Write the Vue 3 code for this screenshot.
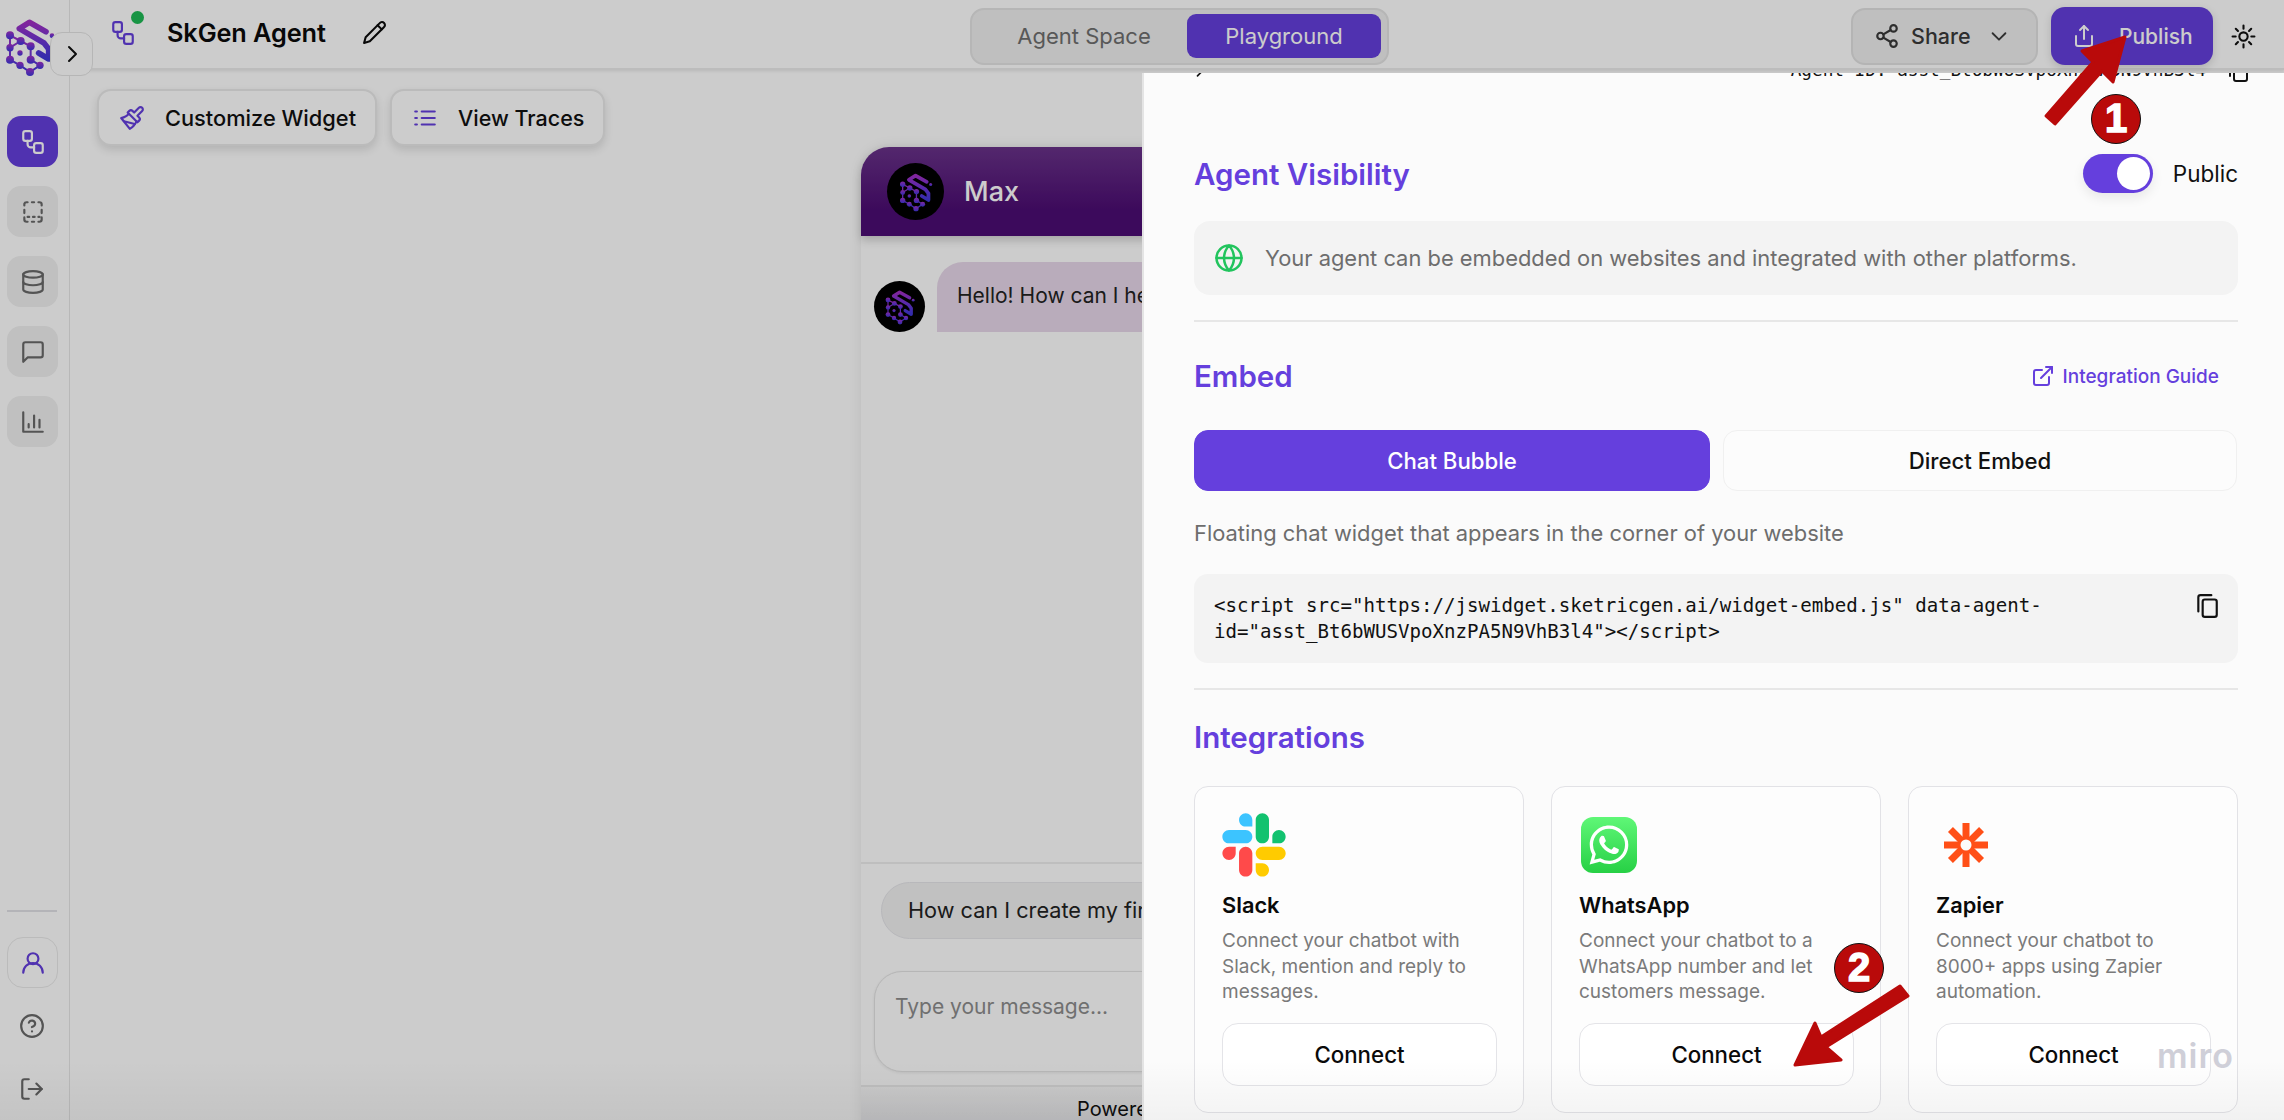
<script setup>
const navItems = ['flow', 'dashed', 'db', 'chat', 'bars']
const integrations = [
  { name: 'Slack', icon: 'slack', desc: 'Connect your chatbot with Slack, mention and reply to messages.' },
  { name: 'WhatsApp', icon: 'whatsapp', desc: 'Connect your chatbot to a WhatsApp number and let customers message.' },
  { name: 'Zapier', icon: 'zapier', desc: 'Connect your chatbot to 8000+ apps using Zapier automation.' }
]
const spokes = [0, 45, 90, 135, 180, 225, 270, 315]
</script>

<template>
  <div class="page">
    <svg class="defs" width="0" height="0" aria-hidden="true">
      <defs>
        <linearGradient id="logoGrad" x1="0" y1="0" x2="0" y2="1">
          <stop offset="0" stop-color="#a22fc4" />
          <stop offset="0.55" stop-color="#6a35d6" />
          <stop offset="1" stop-color="#3f37d8" />
        </linearGradient>
        <linearGradient id="waGrad" x1="0" y1="0" x2="0" y2="1">
          <stop offset="0" stop-color="#5ff777" />
          <stop offset="1" stop-color="#27d045" />
        </linearGradient>
        <symbol id="brand" viewBox="15 20 150 180">
          <g fill="none" stroke="url(#logoGrad)" stroke-linejoin="round">
            <path d="M138 64 88 36 58 55 132 98 146 116V146L116 128" stroke-width="17" />
            <path d="M30 75 62 92 92 108M30 75V148M30 112 62 92M30 148 60 165 90 185 120 165 92 148M92 108 92 148" stroke-width="6" />
          </g>
          <g fill="url(#logoGrad)">
            <circle cx="156" cy="76" r="7" />
            <circle cx="30" cy="75" r="12" /><circle cx="30" cy="112" r="11" /><circle cx="30" cy="148" r="12" />
            <circle cx="62" cy="92" r="12" /><circle cx="92" cy="108" r="12" /><circle cx="60" cy="128" r="8" />
            <circle cx="92" cy="148" r="12" /><circle cx="60" cy="165" r="11" /><circle cx="90" cy="185" r="12" /><circle cx="120" cy="165" r="11" />
          </g>
        </symbol>
        <symbol id="flow" viewBox="0 0 24 24">
          <rect x="3" y="2" width="8" height="9" rx="2" /><rect x="13" y="13" width="8" height="9" rx="2" />
          <path d="M7 11v3a3 3 0 0 0 3 3h3" />
        </symbol>
      </defs>
    </svg>

    <aside class="sidebar">
      <svg class="brand"><use href="#brand" /></svg>
      <nav class="nav">
        <button v-for="(item, i) in navItems" :key="item" class="nav-btn" :class="{ active: i === 0 }">
          <svg v-if="item === 'flow'" class="ic"><use href="#flow" /></svg>
          <svg v-else-if="item === 'dashed'" class="ic" viewBox="0 0 24 24"><path d="M4 6V4.500A2 2 0 0 1 6 3h1M11 3h2M17 3h1a2 2 0 0 1 2 2v1M20 10v3M4 10v3M4 17v2a2 2 0 0 0 2 2h1M11 21h2M17 21h1a2 2 0 0 0 2-2v-2M7 16.500h1.500M12 16.500h1.500M17 16.500h1" /></svg>
          <svg v-else-if="item === 'db'" class="ic" viewBox="0 0 24 24"><ellipse cx="12" cy="5" rx="9" ry="3" /><path d="M3 5v14a9 3 0 0 0 18 0V5" /><path d="M3 12a9 3 0 0 0 18 0" /></svg>
          <svg v-else-if="item === 'chat'" class="ic" viewBox="0 0 24 24"><path d="M21 15a2 2 0 0 1-2 2H7l-4 4V5a2 2 0 0 1 2-2h14a2 2 0 0 1 2 2z" /></svg>
          <svg v-else class="ic" viewBox="0 0 24 24"><path d="M3 3v18h18" /><path d="M8 17v-3M13 17V6M18 17v-7" /></svg>
        </button>
      </nav>
      <div class="side-bottom">
        <div class="side-rule"></div>
        <button class="user-btn">
          <svg class="ic purple" viewBox="0 0 24 24"><circle cx="12" cy="8" r="5" /><path d="M21 21a9 9 0 0 0-18 0" /></svg>
        </button>
        <button class="plain-btn">
          <svg class="ic" viewBox="0 0 24 24"><circle cx="12" cy="12" r="10" /><path d="M9.090 9a3 3 0 0 1 5.830 1c0 2-3 3-3 3" /><path d="M12 17h.010" /></svg>
        </button>
        <button class="plain-btn">
          <svg class="ic" viewBox="0 0 24 24"><path d="M9 21H5a2 2 0 0 1-2-2V5a2 2 0 0 1 2-2h4" /><path d="m16 17 5-5-5-5" /><path d="M21 12H9" /></svg>
        </button>
      </div>
      <button class="expand">
        <svg viewBox="0 0 24 24"><path d="m9 5 7 7-7 7" /></svg>
      </button>
    </aside>

    <main class="main">
      <header class="topbar">
        <div class="top-left">
          <span class="agent-icon">
            <svg class="ic-lg purple"><use href="#flow" /></svg>
            <i class="status"></i>
          </span>
          <h1 class="agent-name">SkGen Agent</h1>
          <svg class="pencil" viewBox="0 0 24 24"><path d="M17 3a2.850 2.830 0 1 1 4 4L7.500 20.500 2 22l1.500-5.500Z" /><path d="m15 5 4 4" /></svg>
        </div>
        <div class="segment">
          <span class="seg-item">Agent Space</span>
          <span class="seg-item on">Playground</span>
        </div>
        <div class="top-right">
          <button class="share">
            <svg class="ic" viewBox="0 0 24 24"><circle cx="18" cy="5" r="3" /><circle cx="6" cy="12" r="3" /><circle cx="18" cy="19" r="3" /><path d="m8.600 13.500 6.800 4M15.400 6.500l-6.800 4" /></svg>
            <span>Share</span>
            <svg class="chev" viewBox="0 0 24 24"><path d="m5 9 7 7 7-7" /></svg>
          </button>
          <button class="publish">
            <svg class="ic-up" viewBox="0 0 24 24"><path d="M4 12v8a2 2 0 0 0 2 2h12a2 2 0 0 0 2-2v-8" /><path d="m16 6-4-4-4 4" /><path d="M12 2v13" /></svg>
            <span>Publish</span>
          </button>
          <svg class="sun" viewBox="0 0 24 24"><circle cx="12" cy="12" r="4" /><path d="M12 1.500v3M12 19.500v3M1.500 12h3M19.500 12h3M4.600 4.600l2.100 2.100M17.300 17.300l2.100 2.100M4.600 19.400l2.100-2.100M17.300 6.700l2.100-2.100" /></svg>
        </div>
      </header>

      <section class="stage">
        <div class="tools">
          <button class="tool">
            <svg class="ic purple" viewBox="0 0 24 24"><path d="M18.370 2.630 14 7l-1.590-1.590a2 2 0 0 0-2.820 0L8 7l9 9 1.590-1.590a2 2 0 0 0 0-2.820L17 10l4.370-4.370a2.120 2.120 0 1 0-3-3Z" /><path d="M9 8c-2 3-4 3.500-7 4l8 10c2-1 6-5 6-7" /><path d="M14.500 17.500 4.500 15" /></svg>
            <span>Customize Widget</span>
          </button>
          <button class="tool">
            <svg class="ic purple" viewBox="0 0 24 24"><path d="M9 6h12M9 12h12M9 18h12" /><path d="M3 6h1.500M3 12h1.500M3 18h1.500" stroke-dasharray="1.500 1.500" /></svg>
            <span>View Traces</span>
          </button>
        </div>

        <article class="chat">
          <div class="chat-head">
            <span class="avatar big"><svg><use href="#brand" /></svg></span>
            <span class="chat-name">Max</span>
          </div>
          <div class="chat-body">
            <div class="msg">
              <span class="avatar small"><svg><use href="#brand" /></svg></span>
              <div class="bubble">Hello! How can I help you today?</div>
            </div>
          </div>
          <div class="suggest">
            <span class="pill">How can I create my first agent?</span>
          </div>
          <div class="input-wrap">
            <div class="input">Type your message...</div>
          </div>
          <div class="chat-foot"><span class="powered">Powered by SketricGen</span></div>
        </article>
      </section>
    </main>

    <div class="scrim"></div>

    <aside class="drawer">
      <div class="agent-row">
        <svg class="mini-chev" viewBox="0 0 24 24"><path d="m9 5 7 7-7 7" /></svg>
        <span class="agent-id">Agent ID: asst_Bt6bWUSVpoXnzPA5N9VhB3l4</span>
        <svg class="copy-top" viewBox="0 0 24 24"><rect x="8" y="6" width="13" height="16" rx="2" /><path d="M4 17V4a2 2 0 0 1 2-2h10" /></svg>
      </div>

      <div class="vis-row">
        <h2 class="heading">Agent Visibility</h2>
        <div class="vis-ctl">
          <span class="toggle"><i class="knob"></i></span>
          <span class="public">Public</span>
        </div>
      </div>

      <div class="info">
        <svg class="globe" viewBox="0 0 24 24"><circle cx="12" cy="12" r="10" /><path d="M2 12h20" /><path d="M12 2a15.300 15.300 0 0 1 4 10 15.300 15.300 0 0 1-4 10 15.300 15.300 0 0 1-4-10 15.300 15.300 0 0 1 4-10z" /></svg>
        <span>Your agent can be embedded on websites and integrated with other platforms.</span>
      </div>

      <hr class="rule rule-a" />

      <div class="embed-head">
        <h2 class="heading">Embed</h2>
        <a class="guide">
          <svg viewBox="0 0 24 24"><path d="M18 13v6a2 2 0 0 1-2 2H5a2 2 0 0 1-2-2V8a2 2 0 0 1 2-2h6" /><path d="M15 3h6v6" /><path d="M10 14 21 3" /></svg>
          <span>Integration Guide</span>
        </a>
      </div>

      <div class="tabs">
        <button class="tab on">Chat Bubble</button>
        <button class="tab">Direct Embed</button>
      </div>

      <p class="hint">Floating chat widget that appears in the corner of your website</p>

      <div class="code">
        <code>&lt;script src="https://jswidget.sketricgen.ai/widget-embed.js" data-agent-<br />id="asst_Bt6bWUSVpoXnzPA5N9VhB3l4"&gt;&lt;/script&gt;</code>
        <svg class="copy" viewBox="0 0 24 24"><rect x="8" y="6" width="13" height="16" rx="2" /><path d="M4 17V4a2 2 0 0 1 2-2h10" /></svg>
      </div>

      <hr class="rule rule-b" />

      <h2 class="heading int-head">Integrations</h2>

      <div class="cards">
        <div v-for="card in integrations" :key="card.name" class="card">
          <div class="logo-box">
            <svg v-if="card.icon === 'slack'" class="slack" viewBox="0 0 127 127">
              <path fill="#ff4a4a" d="M27.200 80c0 7.300-5.900 13.200-13.200 13.200C6.700 93.200.800 87.300.800 80c0-7.300 5.900-13.200 13.200-13.200h13.200V80zm6.600 0c0-7.300 5.900-13.200 13.200-13.200 7.300 0 13.200 5.900 13.200 13.200v33c0 7.300-5.900 13.200-13.200 13.200-7.300 0-13.200-5.900-13.200-13.200V80z" />
              <path fill="#3cc4ff" d="M47 27c-7.300 0-13.200-5.900-13.200-13.200C33.800 6.500 39.700.600 47 .600c7.300 0 13.200 5.900 13.200 13.200V27H47zm0 6.700c7.300 0 13.200 5.900 13.200 13.200 0 7.300-5.900 13.200-13.200 13.200H13.900C6.600 60.100.700 54.200.700 46.900c0-7.300 5.900-13.200 13.200-13.200H47z" />
              <path fill="#12c26f" d="M99.900 46.900c0-7.300 5.900-13.200 13.200-13.200 7.300 0 13.200 5.900 13.200 13.200 0 7.300-5.900 13.200-13.200 13.200H99.900V46.900zm-6.600 0c0 7.300-5.900 13.200-13.200 13.200-7.300 0-13.200-5.900-13.200-13.200V13.800C66.900 6.500 72.800.600 80.100.600c7.300 0 13.200 5.900 13.200 13.200v33.100z" />
              <path fill="#ffcb00" d="M80.100 99.800c7.300 0 13.200 5.900 13.200 13.200 0 7.300-5.900 13.200-13.200 13.200-7.300 0-13.200-5.900-13.200-13.200V99.800h13.200zm0-6.600c-7.300 0-13.200-5.900-13.200-13.200 0-7.300 5.900-13.200 13.200-13.200h33.100c7.300 0 13.200 5.900 13.200 13.200 0 7.300-5.900 13.200-13.200 13.200H80.100z" />
            </svg>
            <svg v-else-if="card.icon === 'whatsapp'" class="whatsapp" viewBox="0 0 56 56">
              <rect width="56" height="56" rx="12" fill="url(#waGrad)" />
              <path transform="translate(8.500 8.500) scale(1.620)" fill="#fff" d="M17.472 14.382c-.297-.149-1.758-.867-2.030-.967-.273-.099-.471-.148-.670.150-.197.297-.767.966-.940 1.164-.173.199-.347.223-.644.075-.297-.150-1.255-.463-2.390-1.475-.883-.788-1.480-1.761-1.653-2.059-.173-.297-.018-.458.130-.606.134-.133.298-.347.446-.520.149-.174.198-.298.298-.497.099-.198.050-.371-.025-.520-.075-.149-.669-1.612-.916-2.207-.242-.579-.487-.500-.669-.510-.173-.008-.371-.010-.570-.010-.198 0-.520.074-.792.372-.272.297-1.040 1.016-1.040 2.479 0 1.462 1.065 2.875 1.213 3.074.149.198 2.096 3.200 5.077 4.487.709.306 1.262.489 1.694.625.712.227 1.360.195 1.871.118.571-.085 1.758-.719 2.006-1.413.248-.694.248-1.289.173-1.413-.074-.124-.272-.198-.570-.347m-5.421 7.403h-.004a9.870 9.870 0 01-5.031-1.378l-.361-.214-3.741.982.998-3.648-.235-.374a9.860 9.860 0 01-1.510-5.260c.001-5.450 4.436-9.884 9.888-9.884 2.640 0 5.122 1.030 6.988 2.898a9.825 9.825 0 012.893 6.994c-.003 5.450-4.437 9.884-9.885 9.884m8.413-18.297A11.815 11.815 0 0012.050 0C5.495 0 .160 5.335.157 11.892c0 2.096.547 4.142 1.588 5.945L.057 24l6.305-1.654a11.882 11.882 0 005.683 1.448h.005c6.554 0 11.890-5.335 11.893-11.893a11.821 11.821 0 00-3.480-8.413z" />
            </svg>
            <svg v-else class="zapier" viewBox="0 0 44 44">
              <path v-for="a in spokes" :key="a" :transform="`rotate(${a} 22 22)`" d="M22 22V0" stroke="#ff4f17" stroke-width="7" fill="none" />
              <circle cx="22" cy="22" r="5.500" fill="#fcfcfc" />
            </svg>
          </div>
          <h3 class="card-title">{{ card.name }}</h3>
          <p class="card-desc">{{ card.desc }}</p>
          <button class="connect">Connect</button>
        </div>
      </div>
    </aside>

    <div class="fade"></div>
    <span class="miro">miro</span>

    <svg class="marks" viewBox="0 0 2284 1120">
      <polygon points="2046,116 2093,62 2082,51 2125,37 2113,82 2102,71 2055,124" />
      <polygon points="1900,986 1908,996 1826,1047 1841,1060 1795,1065 1815,1023 1821,1037" />
    </svg>
    <span class="num one">1</span>
    <span class="num two">2</span>
  </div>
</template>

<style>
html, body { margin: 0; overflow: hidden; background: #fff; }
</style>

<style scoped>
.page {
  position: relative; display: flex; width: 2284px; height: 1120px; overflow: hidden;
  background: #fff; color: #0a0a0a; font-family: Inter, "Noto Sans", sans-serif;
}
.defs { position: absolute; }
button { font-family: inherit; cursor: pointer; }
h1, h2, h3, p { margin: 0; }
svg { fill: none; stroke: currentColor; stroke-width: 2; stroke-linecap: round; stroke-linejoin: round; display: block; }
.ic { width: 26px; height: 26px; }
.ic-lg { width: 26px; height: 26px; }
.purple { color: #653fdd; }

/* sidebar */
.sidebar {
  position: relative; flex: 0 0 70px; box-sizing: border-box; width: 70px; height: 100%;
  display: flex; flex-direction: column; padding: 17px 0 18px 7px; border-right: 1.500px solid #e6e6e6;
}
.brand { width: 50px; height: 60px; margin-left: -2px; stroke: none; }
.nav { display: flex; flex-direction: column; gap: 19px; margin-top: 39px; }
.nav-btn {
  width: 51px; height: 51px; border: 0; border-radius: 14px; background: #f0f0f0; color: #6a6a6a;
  display: flex; align-items: center; justify-content: center; padding: 0;
}
.nav-btn.active { background: #653fdd; color: #fff; }
.side-bottom { margin-top: auto; display: flex; flex-direction: column; align-items: flex-start; }
.side-rule { width: 50px; height: 2px; background: #e2e2e6; margin-bottom: 25px; }
.user-btn {
  width: 51px; height: 51px; box-sizing: border-box; padding: 0; border: 1.500px solid #eaeaea; border-radius: 16px;
  background: #fff; display: flex; align-items: center; justify-content: center; margin-bottom: 25px;
}
.plain-btn {
  width: 50px; height: 26px; padding: 0; border: 0; background: none; color: #6a6a6a;
  display: flex; align-items: center; justify-content: center;
}
.plain-btn + .plain-btn { margin-top: 37px; }
.expand {
  position: absolute; left: 50px; top: 32px; width: 43px; height: 44px; padding: 0; z-index: 3;
  background: #fff; border: 1.500px solid #e4e4e4; border-radius: 12px; color: #111;
  display: flex; align-items: center; justify-content: center;
}
.expand svg { width: 24px; height: 24px; }

/* main */
.main { flex: 1; min-width: 0; display: flex; flex-direction: column; overflow: hidden; }
.topbar {
  box-sizing: border-box; height: 70px; flex: none; display: grid; grid-template-columns: 1fr auto 1fr; align-items: center;
  padding: 0 28px 7px 33px; border-bottom: 2px solid #ececec; box-shadow: 0 1px 3px rgba(0,0,0,.1);
}
.top-left { display: flex; align-items: center; padding-left: 7px; }
.agent-icon { position: relative; display: block; width: 26px; height: 26px; margin-right: 31px; }
.status { position: absolute; left: 21px; top: -9px; width: 13px; height: 13px; border-radius: 50%; background: #1fb955; }
.agent-name { font-size: 25.300px; font-weight: 600; letter-spacing: -.1px; }
.pencil { width: 25px; height: 25px; margin-left: 36px; }
.segment {
  box-sizing: border-box; width: 419px; height: 57px; display: flex; align-items: center; justify-content: space-between;
  padding: 0 6px 0 24px; margin-top: 7px; background: #efefef; border: 2px solid #e4e4e4; border-radius: 14px;
}
.seg-item { font-size: 22px; color: #6e6e6e; width: 176px; text-align: center; }
.seg-item.on {
  width: 194px; height: 44px; line-height: 44px; background: #653fdd; color: #fff; border-radius: 9px;
}
.top-right { display: flex; align-items: center; justify-content: flex-end; margin-top: 7px; }
.share {
  box-sizing: border-box; width: 187px; height: 57px; padding: 0 26px 0 21px; margin-right: 13px;
  display: flex; align-items: center; background: #efefef; border: 2px solid #e2e2e2; border-radius: 14px;
  font-size: 21.500px; font-weight: 500; color: #3a3a3a;
}
.share span { margin-left: 11px; }
.chev { width: 22px; height: 22px; margin-left: auto; }
.publish {
  width: 162px; height: 58px; padding: 0 0 0 21px; border: 0; border-radius: 14px; background: #653fdd; color: #fff;
  display: flex; align-items: center; font-size: 21px; font-weight: 500; box-shadow: 0 3px 8px rgba(0,0,0,.15);
}
.ic-up { width: 24px; height: 24px; }
.publish span { margin-left: 23px; }
.sun { width: 25px; height: 25px; margin-left: 18px; color: #111; }

/* stage */
.stage { flex: 1; min-height: 0; display: flex; flex-direction: column; padding: 19px 27px 0; }
.tools { display: flex; gap: 13px; }
.tool {
  box-sizing: border-box; height: 57px; padding: 0 19px 0 20px; display: flex; align-items: center; gap: 20px;
  background: #fff; border: 2px solid #eaeaea; border-radius: 14px; font-size: 21.800px; font-weight: 500; color: #111;
  box-shadow: 0 4px 8px rgba(0,0,0,.12);
}
.tool + .tool { font-size: 21.500px; }
.chat {
  box-sizing: border-box; width: 632px; height: 990px; flex: none; align-self: center; margin-top: 1px;
  display: flex; flex-direction: column; border-radius: 28px 28px 0 0; background: #fff;
  box-shadow: 0 0 14px rgba(0,0,0,.08);
}
.chat-head {
  height: 89px; flex: none; display: flex; align-items: center; padding-left: 26px; border-radius: 28px 28px 0 0;
  background: linear-gradient(#693289, #4c0d73 70%); box-shadow: 0 4px 10px rgba(0,0,0,.2);
}
.chat-name { font-size: 27px; font-weight: 500; color: #fff; margin-left: 20px; }
.avatar { display: flex; align-items: center; justify-content: center; background: #000; border-radius: 50%; flex: none; }
.avatar.big { width: 57px; height: 57px; }
.avatar.big svg { width: 34px; height: 40px; stroke: none; }
.avatar.small { width: 51px; height: 51px; }
.avatar.small svg { width: 30px; height: 36px; stroke: none; }
/* the drawer covers the widget from 281px on, so its rows stop there */
.chat-body { height: 626px; flex: none; box-sizing: border-box; padding: 26px 0 0 13px; width: 281px; overflow: hidden; }
.msg { display: flex; align-items: flex-end; gap: 12px; }
.bubble {
  height: 70px; line-height: 68px; padding: 0 20px; font-size: 21px; white-space: nowrap; color: #222;
  background: #e8d8ea; border-radius: 26px 26px 0 0;
}
.suggest { flex: none; border-top: 2px solid #eeeeee; padding: 18px 0 0 20px; height: 89px; box-sizing: border-box; width: 281px; overflow: hidden; }
.pill {
  display: inline-block; height: 57px; line-height: 55px; box-sizing: border-box; padding: 0 26px; white-space: nowrap;
  background: #f2f2f2; border: 1.500px solid #e6e6ea; border-radius: 29px; font-size: 21.700px; color: #222;
}
.input-wrap { flex: none; padding: 20px 13px 13px; }
.input {
  box-sizing: border-box; height: 101px; padding: 22px 20px; background: #fff; border: 1.500px solid #e4e4e4;
  border-radius: 28px; font-size: 21px; color: #8c8c8c; box-shadow: 0 1px 3px rgba(0,0,0,.08);
}
.chat-foot {
  flex: 1; border-top: 2px solid #ececec; background: linear-gradient(#fafafa, #e6e6ea); padding: 10px 0 0 216px;
}
.powered { font-size: 20px; color: #111; white-space: nowrap; }

.scrim { position: absolute; inset: 0; background: rgba(0,0,0,.2); z-index: 5; }

/* drawer */
.drawer {
  position: absolute; z-index: 6; left: 1142px; top: 73px; right: 0; bottom: 0; box-sizing: border-box;
  padding: 0 46px 0 50px; background: #fbfbfb; overflow: hidden; border-left: 2px solid #e4e4e4;
}
.agent-row { height: 30px; margin-top: -18px; display: flex; align-items: center; position: relative; }
.mini-chev { width: 20px; height: 20px; margin-left: -4px; color: #111; }
.agent-id { margin-left: auto; margin-right: 20px; font-family: "DejaVu Sans Mono", monospace; font-size: 17.700px; color: #111; white-space: nowrap; }
.copy-top { width: 24px; height: 24px; margin-right: -12px; margin-top: 2px; color: #111; }
.heading { font-size: 29.500px; line-height: 38px; font-weight: 600; color: #653fdd; }
.vis-row { height: 39px; margin-top: 69px; display: flex; align-items: center; justify-content: space-between; }
.vis-ctl { display: flex; align-items: center; }
.toggle {
  display: block; position: relative; width: 70px; height: 39px; border-radius: 20px; background: #653fdd;
  box-shadow: 0 5px 12px rgba(0,0,0,.08);
}
.knob { position: absolute; right: 3px; top: 3px; width: 33px; height: 33px; border-radius: 50%; background: #fff; }
.public { margin-left: 20px; font-size: 22.500px; color: #111; }
.info {
  box-sizing: border-box; height: 74px; margin-top: 28px; display: flex; align-items: center; padding-left: 20px; gap: 21px;
  background: #f3f3f3; border-radius: 16px; font-size: 21.900px; color: #6d6d6d;
}
.globe { width: 30px; height: 30px; color: #21c45d; }
.rule { border: 0; height: 2px; margin: 0; background: #e7e7e7; }
.rule-a { margin-top: 25px; }
.embed-head { height: 40px; margin-top: 34px; display: flex; align-items: center; justify-content: space-between; }
.guide { display: flex; align-items: center; gap: 8px; margin-right: 19px; font-size: 19px; color: #653fdd; font-weight: 500; }
.guide svg { width: 24px; height: 24px; }
.tabs { display: grid; grid-template-columns: 516px 514px; gap: 13px; margin-top: 34px; }
.tab {
  height: 61px; border: 1.500px solid #f0f0f0; border-radius: 14px; background: #fcfcfc; color: #111;
  font-size: 22.200px; font-weight: 500; padding: 0;
}
.tab.on { background: #653fdd; border-color: #653fdd; color: #fff; }
.hint { height: 30px; line-height: 30px; margin-top: 27px; font-size: 21.900px; color: #6d6d6d; }
.code {
  box-sizing: border-box; height: 89px; margin-top: 26px; position: relative; padding: 19px 20px 0; background: #f3f3f3; border-radius: 14px;
}
.code code { display: block; font-family: "DejaVu Sans Mono", monospace; font-size: 19.100px; line-height: 26px; color: #111; white-space: nowrap; }
.copy { position: absolute; right: 18px; top: 19px; width: 26px; height: 26px; color: #111; }
.rule-b { margin-top: 25px; }
.int-head { height: 40px; line-height: 40px; margin-top: 27px; }
.cards { display: grid; grid-template-columns: repeat(3, 330px); gap: 27px; margin-top: 29px; }
.card {
  box-sizing: border-box; height: 327px; padding: 26px 26px 26px 27px; background: #fdfdfd; border: 1.500px solid #e2e2e6; border-radius: 14px;
}
.logo-box { height: 64px; width: 60px; display: flex; align-items: center; justify-content: center; }
.slack { width: 64px; height: 64px; flex: none; margin-left: 4px; stroke: none; }
.whatsapp { width: 56px; height: 56px; flex: none; stroke: none; }
.zapier { width: 44px; height: 44px; flex: none; stroke: none; stroke-linecap: butt; }
.card-title { height: 28px; line-height: 28px; margin-top: 14px; font-size: 21.800px; font-weight: 600; color: #0a0a0a; }
.card-desc { margin-top: 9px; height: 77px; font-size: 19px; line-height: 25.500px; color: #7a7a7a; }
.connect {
  display: block; box-sizing: border-box; width: 275px; height: 63px; margin-top: 18px; border: 1.500px solid #e4e4e8; border-radius: 16px;
  background: #fff; font-size: 22.300px; font-weight: 500; color: #0a0a0a; padding: 0;
}

.fade { position: absolute; z-index: 7; left: 0; right: 0; bottom: 0; height: 60px; background: linear-gradient(transparent, rgba(0,0,0,.04)); pointer-events: none; }
.miro { position: absolute; z-index: 8; left: 2157px; top: 1036px; font-size: 34px; line-height: 40px; font-weight: 600; letter-spacing: 1px; color: #cfcfd8; font-family: Inter, sans-serif; }
.marks { position: absolute; z-index: 9; inset: 0; width: 2284px; height: 1120px; pointer-events: none; }
.marks polygon { fill: #b90a0a; stroke: #b90a0a; stroke-width: 3; stroke-linejoin: round; }
.num {
  position: absolute; z-index: 10; width: 50px; height: 50px; box-sizing: border-box; border-radius: 50%;
  background: #b90a0a; border: 1.500px solid #111; color: #fff; font-family: "Liberation Sans", sans-serif; font-weight: 700;
  font-size: 40px; line-height: 47px; text-align: center; -webkit-text-stroke: 1.500px #fff;
}
.one { left: 2091px; top: 94px; }
.two { left: 1834px; top: 943px; }
</style>
